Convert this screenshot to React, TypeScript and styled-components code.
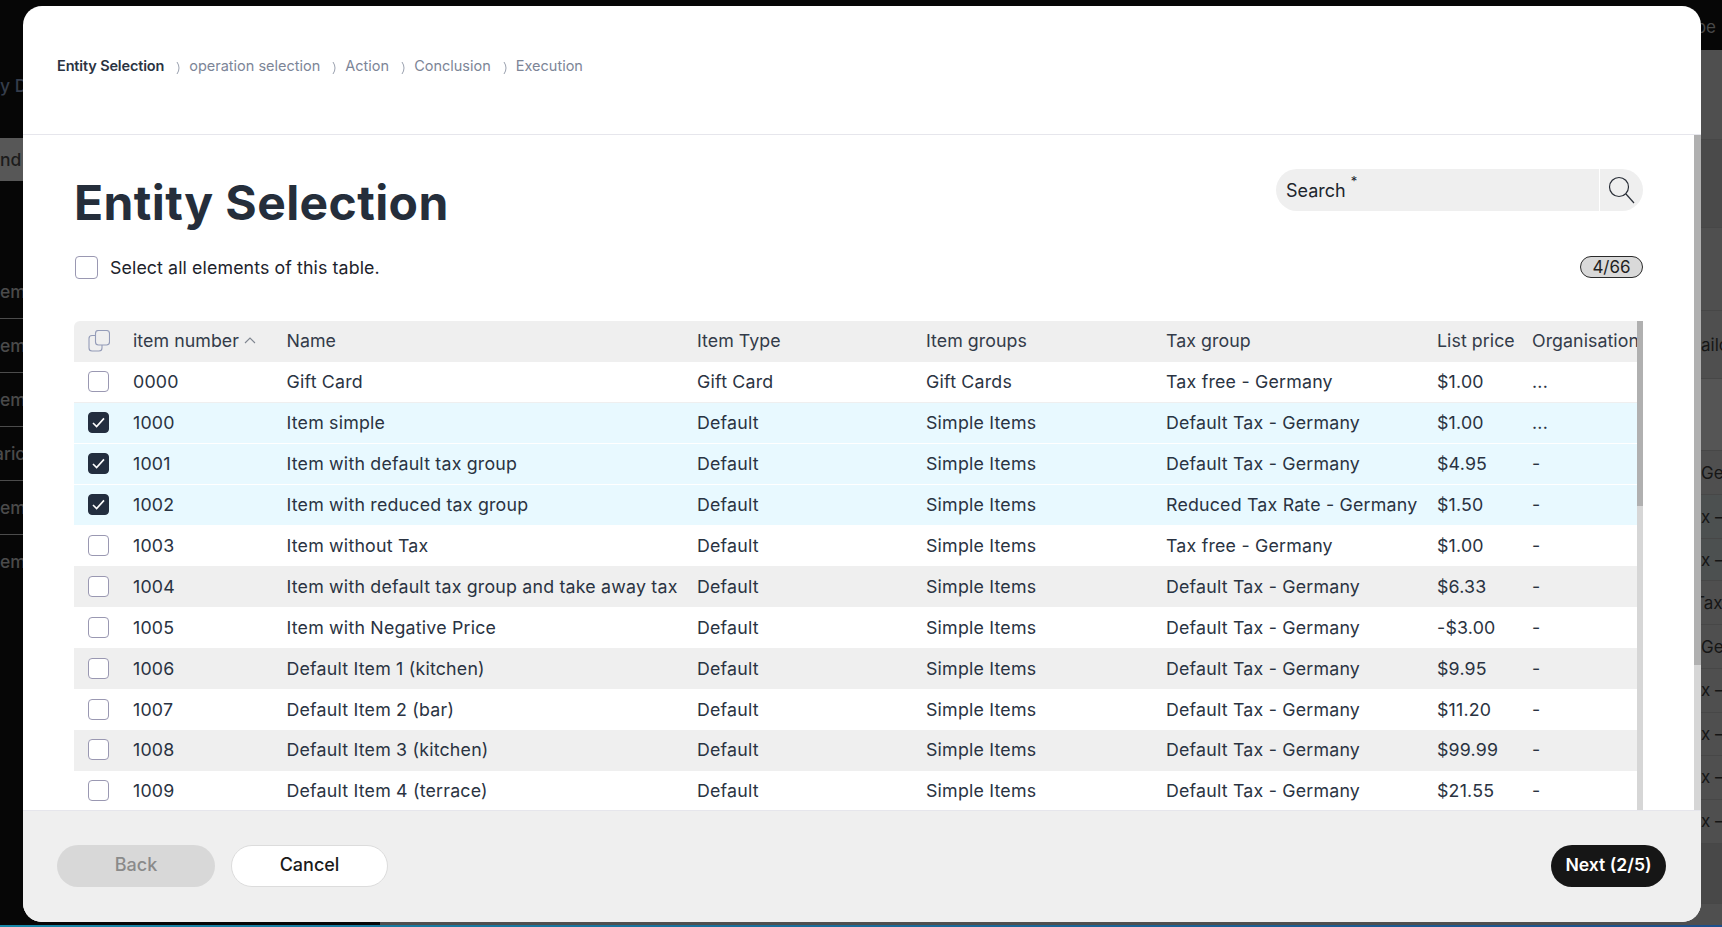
import React from 'react';
import styled, { createGlobalStyle } from 'styled-components';

const GlobalStyle = createGlobalStyle`
  html, body {
    margin: 0;
    padding: 0;
    background: #060606;
    font-family: Inter, "Liberation Sans", sans-serif;
  }
  * { box-sizing: border-box; }
`;

const Page = styled.div`
  position: relative;
  width: 1722px;
  height: 927px;
  overflow: hidden;
  display: flex;
  flex-direction: column;
  background: #060606;
`;

const Backdrop = styled.div`
  flex: 1;
  display: flex;
  min-height: 0;
`;

const SideNav = styled.div`
  width: 380px;
  background: #060606;
  color: #4a4a4a;
  font-size: 17.5px;
  font-weight: 500;
  padding-top: 74px;
`;

const SideTitle = styled.div`
  height: 64px;
  line-height: 24px;
  color: #353d4b;
  white-space: nowrap;
`;

const SideTab = styled.div`
  height: 43px;
  line-height: 43px;
  background: #575757;
  color: #1c1c1c;
  margin-bottom: 84px;
`;

const SideRow = styled.div<{ $indent?: number }>`
  height: 54px;
  line-height: 54px;
  text-indent: ${p => p.$indent || 0}px;
  white-space: nowrap;
  border-bottom: 1px solid #4b4b4b;
  &:last-child { border-bottom: 0; }
`;

const Behind = styled.div`
  flex: 1;
  display: flex;
  flex-direction: column;
  background: #4f4f4f;
`;

const BehindTop = styled.div`
  height: 50px;
  flex-shrink: 0;
  background: #060606;
  color: #484848;
  font-size: 17px;
  line-height: 54px;
  text-align: right;
  padding-right: 6px;
`;

const BehindRow = styled.div<{ $h: number; $tint?: string }>`
  height: ${p => p.$h}px;
  flex-shrink: 0;
  display: flex;
  justify-content: flex-end;
  align-items: center;
  background: ${p => p.$tint || 'transparent'};
  border-bottom: 1px solid #474747;
`;

const BehindCell = styled.span<{ $indent?: number }>`
  width: 21px;
  overflow: hidden;
  white-space: nowrap;
  font-size: 17px;
  color: #161616;
  text-indent: ${p => p.$indent || 0}px;
`;

const BottomEdge = styled.div`
  height: 5px;
  flex-shrink: 0;
  display: flex;
  flex-direction: column;
`;

const EdgeDark = styled.div`
  height: 3px;
  background: linear-gradient(to right, #060606 380px, #4f4f4f 380px);
`;

const EdgeBlue = styled.div`
  height: 2px;
  background: linear-gradient(to right, #1587a8, #1d4f8c);
`;

const Modal = styled.div`
  position: absolute;
  left: 23px;
  top: 6px;
  width: 1678px;
  height: 916px;
  display: flex;
  flex-direction: column;
  background: #fff;
  border-radius: 19px;
  overflow: hidden;
`;

const ModalHeader = styled.div`
  height: 129px;
  flex-shrink: 0;
  border-bottom: 1px solid #e6e6ec;
  padding: 47px 0 0 34px;
`;

const Steps = styled.div`
  display: flex;
  align-items: center;
  height: 24px;
  font-size: 14.5px;
  white-space: nowrap;
`;

const Step = styled.span<{ $active?: boolean }>`
  font-weight: ${p => (p.$active ? 600 : 400)};
  color: ${p => (p.$active ? '#2a3342' : '#7c8597')};
  letter-spacing: ${p => (p.$active ? '-0.15px' : '0')};
`;

const StepSep = styled.svg`
  width: 6px;
  height: 14px;
  margin: 5px 7px 0 12px;
  fill: none;
  stroke: #9aa1af;
  stroke-width: 1;
`;

const ModalBody = styled.div`
  flex: 1;
  display: flex;
  min-height: 0;
`;

const Content = styled.div`
  flex: 1;
  min-width: 0;
  display: flex;
  flex-direction: column;
  padding: 34px 51px 0;
`;

const TitleRow = styled.div`
  height: 87px;
  flex-shrink: 0;
  display: flex;
  justify-content: space-between;
  align-items: flex-start;
`;

const Title = styled.h1`
  margin: 0;
  font-size: 48px;
  letter-spacing: 0.4px;
  line-height: 68px;
  font-weight: 700;
  color: #252e3b;
  white-space: nowrap;
`;

const SearchBox = styled.div`
  width: 367px;
  height: 42px;
  display: flex;
  background: #efefef;
  border-radius: 21px;
  overflow: hidden;
`;

const SearchField = styled.div`
  flex: 1;
  padding: 3px 0 0 10px;
  font-size: 18px;
  line-height: 38px;
  color: #20252d;
  display: flex;
`;

const Star = styled.sup`
  font-size: 13px;
  line-height: 18px;
  margin-left: 5px;
`;

const SearchBtn = styled.div`
  width: 44px;
  padding-right: 2px;
  border-left: 1px solid #fff;
  display: flex;
  align-items: center;
  justify-content: center;
`;

const SelectRow = styled.div`
  height: 23px;
  flex-shrink: 0;
  margin-bottom: 42px;
  display: flex;
  align-items: flex-start;
  justify-content: space-between;
`;

const SelectAll = styled.label`
  display: flex;
  align-items: center;
  gap: 12px;
  height: 23px;
  margin-left: 1px;
  font-size: 17.8px;
  letter-spacing: 0.1px;
  color: #1d232c;
`;

const CheckBox = styled.span<{ $checked?: boolean; $size?: number }>`
  width: ${p => p.$size || 21}px;
  height: ${p => p.$size || 21}px;
  flex-shrink: 0;
  display: inline-flex;
  align-items: center;
  justify-content: center;
  border-radius: 4px;
  background: ${p => (p.$checked ? '#232e3f' : '#fff')};
  border: 1px solid ${p => (p.$checked ? '#232e3f' : '#9a98b2')};
`;

const TickIcon = styled.svg`
  width: 13px;
  height: 11px;
  fill: none;
  stroke: #fff;
  stroke-width: 1.6;
`;

const Counter = styled.div`
  width: 63px;
  height: 22px;
  display: flex;
  align-items: center;
  justify-content: center;
  border: 1px solid #2a2a2a;
  border-radius: 11px;
  background: #d9d9d9;
  font-size: 17px;
  color: #222;
`;

const TableArea = styled.div`
  flex: 1;
  min-height: 0;
  display: flex;
`;

const Table = styled.div`
  flex: 1;
  min-width: 0;
  overflow: hidden;
`;

const Row = styled.div<{ $bg?: string; $line?: string }>`
  display: grid;
  grid-template-columns: 59px 153.5px 410.5px 229px 240px 271px 95px 1fr;
  height: 40.9px;
  align-items: center;
  background: ${p => p.$bg || '#fff'};
  border-bottom: 1px solid ${p => p.$line || 'transparent'};
  font-size: 17.8px;
  letter-spacing: 0.2px;
  color: #2a3342;
`;

const HeadRow = styled(Row)`
  height: 41px;
  padding-bottom: 1px;
  border-radius: 6px 0 0 0;
  letter-spacing: 0.05px;
  color: #333b49;
`;

const BoxCell = styled.div`
  padding-left: 14px;
  display: flex;
  align-items: center;
`;

const Cell = styled.div`
  white-space: nowrap;
  overflow: hidden;
`;

const SortCell = styled(Cell)`
  display: flex;
  align-items: center;
  gap: 5px;
`;

const CopyIcon = styled.svg`
  width: 22px;
  height: 22px;
  fill: none;
  stroke: #949cb8;
  stroke-width: 1.1;
`;

const Chevron = styled.svg`
  width: 12px;
  height: 7px;
  fill: none;
  stroke: #7f8690;
  stroke-width: 1.1;
`;

const Track = styled.div<{ $w: number }>`
  width: ${p => p.$w}px;
  flex-shrink: 0;
  background: #d6d6d6;
`;

const Thumb = styled.div<{ $h: number }>`
  height: ${p => p.$h}px;
  background: #b0b0b0;
`;

const ModalFooter = styled.div`
  height: 112px;
  flex-shrink: 0;
  display: flex;
  align-items: center;
  padding: 0 35px 2px 34px;
  background: #efefef;
  border-top: 1px solid #e6e6ec;
`;

const Btn = styled.button<{ $kind: 'off' | 'light' | 'dark'; $w: number }>`
  width: ${p => p.$w}px;
  height: 42px;
  border-radius: 21px;
  font-family: inherit;
  font-size: ${p => (p.$kind === 'dark' ? 17.6 : 18)}px;
  font-weight: ${p => (p.$kind === 'dark' ? 600 : 500)};
  padding: 0 0 2px;
  border: 1px solid ${p => (p.$kind === 'light' ? '#dcdcdc' : 'transparent')};
  background: ${p => (p.$kind === 'off' ? '#d8d8d8' : p.$kind === 'light' ? '#fff' : '#161616')};
  color: ${p => (p.$kind === 'off' ? '#8a8a8a' : p.$kind === 'light' ? '#1a1a1a' : '#fff')};
`;

const FooterGap = styled.div`
  width: 16px;
`;

const FooterFill = styled.div`
  flex: 1;
`;

const steps = ['Entity Selection', 'operation selection', 'Action', 'Conclusion', 'Execution'];

const sideRows: [string, number][] = [['em', 0], ['em', 0], ['em', 0], ['aric', -6], ['em', 0], ['em', 0]];

const behindRows: [number, string, string?, number?][] = [
  [90, ''],
  [88, '', '#4a4a4a'],
  [83, ''],
  [68, 'ailo'],
  [72, '', '#555'],
  [44, 'Ge'],
  [44, 'x –', '#4c5050'],
  [42, 'x –', '#4c5050'],
  [44, 'Tax', undefined, -7],
  [44, 'Ge'],
  [43.5, 'x –'],
  [43.5, 'x –'],
  [43.5, 'x –'],
  [44, 'x –'],
  [60, '', '#484848'],
];

type Item = { no: string; name: string; type: string; group: string; tax: string; price: string; org: string; checked?: boolean };

const items: Item[] = [
  { no: '0000', name: 'Gift Card', type: 'Gift Card', group: 'Gift Cards', tax: 'Tax free - Germany', price: '$1.00', org: '...' },
  { no: '1000', name: 'Item simple', type: 'Default', group: 'Simple Items', tax: 'Default Tax - Germany', price: '$1.00', org: '...', checked: true },
  { no: '1001', name: 'Item with default tax group', type: 'Default', group: 'Simple Items', tax: 'Default Tax - Germany', price: '$4.95', org: '-', checked: true },
  { no: '1002', name: 'Item with reduced tax group', type: 'Default', group: 'Simple Items', tax: 'Reduced Tax Rate - Germany', price: '$1.50', org: '-', checked: true },
  { no: '1003', name: 'Item without Tax', type: 'Default', group: 'Simple Items', tax: 'Tax free - Germany', price: '$1.00', org: '-' },
  { no: '1004', name: 'Item with default tax group and take away tax', type: 'Default', group: 'Simple Items', tax: 'Default Tax - Germany', price: '$6.33', org: '-' },
  { no: '1005', name: 'Item with Negative Price', type: 'Default', group: 'Simple Items', tax: 'Default Tax - Germany', price: '-$3.00', org: '-' },
  { no: '1006', name: 'Default Item 1 (kitchen)', type: 'Default', group: 'Simple Items', tax: 'Default Tax - Germany', price: '$9.95', org: '-' },
  { no: '1007', name: 'Default Item 2 (bar)', type: 'Default', group: 'Simple Items', tax: 'Default Tax - Germany', price: '$11.20', org: '-' },
  { no: '1008', name: 'Default Item 3 (kitchen)', type: 'Default', group: 'Simple Items', tax: 'Default Tax - Germany', price: '$99.99', org: '-' },
  { no: '1009', name: 'Default Item 4 (terrace)', type: 'Default', group: 'Simple Items', tax: 'Default Tax - Germany', price: '$21.55', org: '-' },
];

function rowColors(item: Item, i: number) {
  if (item.checked) return { bg: '#e8f9ff', line: '#fff' };
  if (i === 0) return { bg: '#fff', line: '#efefef' };
  if (i >= 5 && i % 2 === 1) return { bg: '#efefef', line: 'transparent' };
  return { bg: '#fff', line: 'transparent' };
}

export default function App() {
  return (
    <Page>
      <GlobalStyle />
      <Backdrop>
        <SideNav>
          <SideTitle>y D</SideTitle>
          <SideTab>nd</SideTab>
          {sideRows.map(([t, indent], i) => <SideRow key={i} $indent={indent}>{t}</SideRow>)}
        </SideNav>
        <Behind>
          <BehindTop>pe</BehindTop>
          {behindRows.map(([h, t, tint, indent], i) => (
            <BehindRow key={i} $h={h} $tint={tint}><BehindCell $indent={indent}>{t}</BehindCell></BehindRow>
          ))}
        </Behind>
      </Backdrop>
      <BottomEdge>
        <EdgeDark />
        <EdgeBlue />
      </BottomEdge>

      <Modal>
        <ModalHeader>
          <Steps>
            {steps.map((s, i) => (
              <React.Fragment key={s}>
                {i > 0 && (
                  <StepSep viewBox="0 0 6 14"><path d="M1 1 Q5 7 1 13" /></StepSep>
                )}
                <Step $active={i === 0}>{s}</Step>
              </React.Fragment>
            ))}
          </Steps>
        </ModalHeader>

        <ModalBody>
          <Content>
            <TitleRow>
              <Title>Entity Selection</Title>
              <SearchBox>
                <SearchField>Search<Star>*</Star></SearchField>
                <SearchBtn>
                  <svg width="28" height="28" viewBox="0 0 28 28" fill="none" stroke="#2a2f38" strokeWidth="1.2">
                    <circle cx="12" cy="11" r="9.5" />
                    <path d="M19 18 L27 27" />
                  </svg>
                </SearchBtn>
              </SearchBox>
            </TitleRow>

            <SelectRow>
              <SelectAll>
                <CheckBox $size={23} />
                Select all elements of this table.
              </SelectAll>
              <Counter>4/66</Counter>
            </SelectRow>

            <TableArea>
              <Table>
                <HeadRow $bg="#efefef">
                  <BoxCell>
                    <CopyIcon viewBox="0 0 22 22">
                      <rect x="7.5" y="0.5" width="14" height="14.5" rx="3" />
                      <path d="M7.5 5.5 H4 a3 3 0 0 0 -3 3 V18 a3 3 0 0 0 3 3 H11 a3 3 0 0 0 3 -3 V15" />
                    </CopyIcon>
                  </BoxCell>
                  <SortCell>
                    item number
                    <Chevron viewBox="0 0 12 7"><path d="M1 6 L6 1 L11 6" /></Chevron>
                  </SortCell>
                  <Cell>Name</Cell>
                  <Cell>Item Type</Cell>
                  <Cell>Item groups</Cell>
                  <Cell>Tax group</Cell>
                  <Cell>List price</Cell>
                  <Cell>Organisation</Cell>
                </HeadRow>
                {items.map((it, i) => {
                  const c = rowColors(it, i);
                  return (
                    <Row key={it.no} $bg={c.bg} $line={c.line}>
                      <BoxCell>
                        <CheckBox $checked={it.checked}>
                          {it.checked && (
                            <TickIcon viewBox="0 0 13 11"><path d="M1 6 L4.6 9.6 L12 1.4" /></TickIcon>
                          )}
                        </CheckBox>
                      </BoxCell>
                      <Cell>{it.no}</Cell>
                      <Cell>{it.name}</Cell>
                      <Cell>{it.type}</Cell>
                      <Cell>{it.group}</Cell>
                      <Cell>{it.tax}</Cell>
                      <Cell>{it.price}</Cell>
                      <Cell>{it.org}</Cell>
                    </Row>
                  );
                })}
              </Table>
              <Track $w={6}><Thumb $h={185} /></Track>
            </TableArea>
          </Content>
          <Track $w={7}><Thumb $h={530} /></Track>
        </ModalBody>

        <ModalFooter>
          <Btn $kind="off" $w={158}>Back</Btn>
          <FooterGap />
          <Btn $kind="light" $w={157}>Cancel</Btn>
          <FooterFill />
          <Btn $kind="dark" $w={115}>Next (2/5)</Btn>
        </ModalFooter>
      </Modal>
    </Page>
  );
}
